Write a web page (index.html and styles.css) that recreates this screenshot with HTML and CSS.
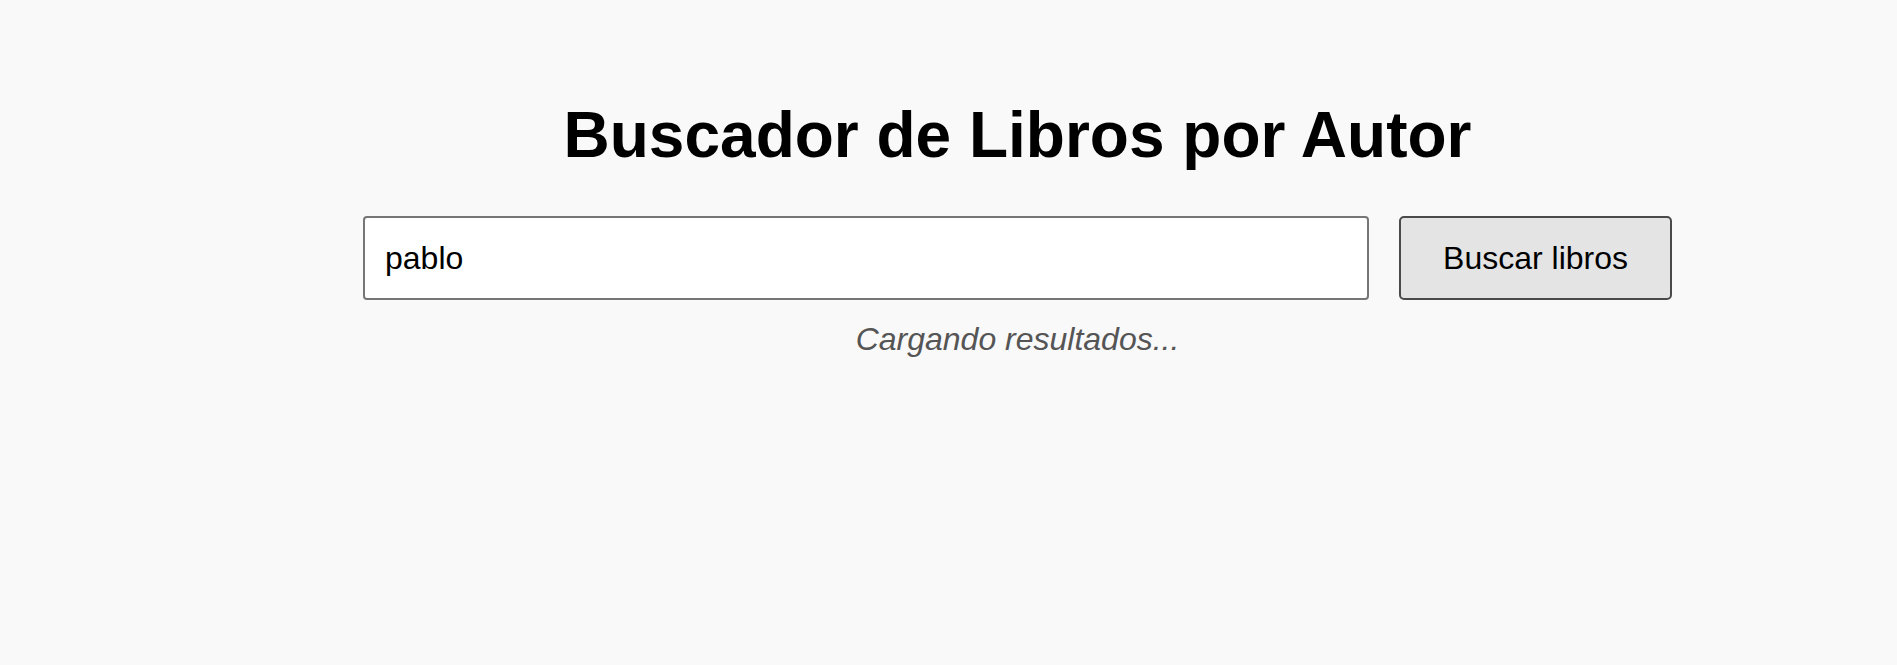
FILE: index.html
```html
<!DOCTYPE html>
<html lang="es">
<head>
<meta charset="utf-8">
<title>Buscador de Libros por Autor</title>
<link rel="stylesheet" href="styles.css">
</head>
<body>
<main class="page">
  <div class="app">
    <h1 class="title">Buscador de Libros por Autor</h1>
    <form class="search">
      <input class="search-input" type="text" value="pablo">
      <button class="search-button" type="button">Buscar libros</button>
    </form>
    <p class="status">Cargando resultados...</p>
  </div>
</main>
</body>
</html>
```

FILE: styles.css
```css
html, body {
  margin: 0;
  padding: 0;
  background: #f9f9f9;
}

body {
  font-family: "Liberation Sans", Arial, Helvetica, sans-serif;
  color: #000;
}

.page {
  padding: 98px 225px 0 363px;
}

.app {
  display: flex;
  flex-direction: column;
  align-items: stretch;
}

.title {
  margin: 0;
  font-size: 64px;
  line-height: 74px;
  font-weight: bold;
  text-align: center;
}

.search {
  display: flex;
  gap: 30px;
  margin: 44px 0 0;
}

.search-input {
  flex: 1;
  box-sizing: border-box;
  height: 84px;
  padding: 0 20px;
  font-family: inherit;
  font-size: 32px;
  color: #000;
  background: #fff;
  border: 2px solid #767676;
  border-radius: 4px;
  outline: none;
}

.search-button {
  box-sizing: border-box;
  height: 84px;
  padding: 0 42px;
  font-family: inherit;
  font-size: 32px;
  color: #000;
  background: #e4e4e4;
  border: 2px solid #4a4a4a;
  border-radius: 5px;
}

.status {
  margin: 21px 0 0;
  font-size: 32px;
  font-style: italic;
  color: #555;
  text-align: center;
}
```
